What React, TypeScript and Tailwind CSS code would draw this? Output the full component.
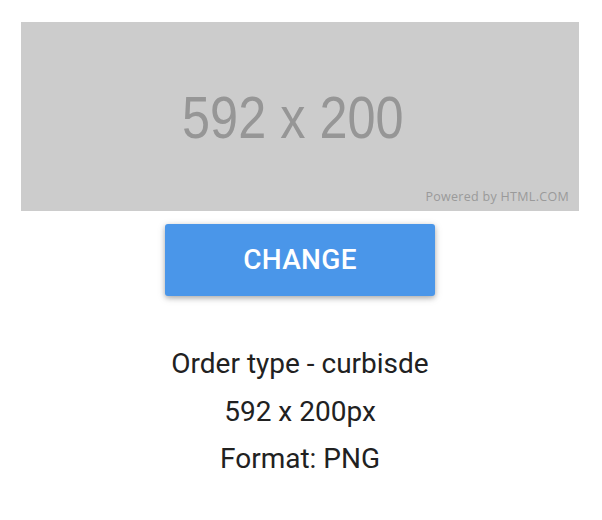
export default function App() {
  return (
    <div className="min-h-[520px] w-[602px] bg-white pt-[22px]" style={{ fontFamily: 'Roboto, "Liberation Sans", sans-serif' }}>
      <div className="ml-[21px] flex w-[558px] flex-col items-center">
        <div className="relative flex h-[189px] w-full items-center justify-center bg-[#cccccc]">
          <span className="-ml-[14px] mt-[3px] scale-x-[0.84] text-[60px] leading-none text-[#969696]" style={{ fontFamily: '"Liberation Sans", Arial, sans-serif' }}>
            592 x 200
          </span>
          <span className="absolute bottom-[8px] right-[10px] text-[12.5px] leading-none tracking-[0.3px] text-[#9a9a9a]" style={{ fontFamily: '"Open Sans", sans-serif' }}>
            Powered by HTML.COM
          </span>
        </div>
        <button className="mt-[13px] h-[72px] w-[270px] rounded-[3px] bg-[#4a96e9] text-[28px] font-medium tracking-[0.3px] text-white shadow-[0_2px_5px_rgba(0,0,0,0.26),0_2px_10px_rgba(0,0,0,0.12)]">
          CHANGE
        </button>
        <div className="mt-[44px] flex flex-col items-center text-[28px] leading-[47.5px] text-[#212121]">
          <p>Order type - curbisde</p>
          <p>592 x 200px</p>
          <p>Format: PNG</p>
        </div>
      </div>
    </div>
  );
}
